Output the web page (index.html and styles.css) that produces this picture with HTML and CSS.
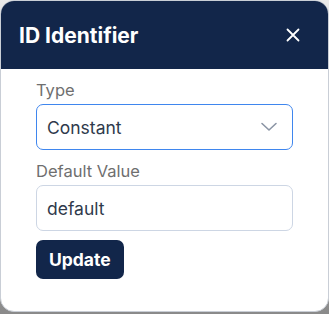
FILE: index.html
```html
<!DOCTYPE html>
<html lang="en">
<head>
    <meta charset="UTF-8">
    <meta name="viewport" content="width=device-width, initial-scale=1.0">
    <title>ID Identifier</title>
    <link rel="stylesheet" href="styles.css">
</head>
<body>
    <div class="dialog">
        <header class="dialog-header">
            <h1 class="dialog-title">ID Identifier</h1>
            <button class="close-btn" aria-label="Close">
                <svg width="14" height="14" viewBox="0 0 14 14">
                    <path d="M1.5 1.5 L12.5 12.5 M12.5 1.5 L1.5 12.5" stroke="#fff" stroke-width="1.8" stroke-linecap="round"/>
                </svg>
            </button>
        </header>
        <form class="dialog-body">
            <div class="field">
                <label for="type">Type</label>
                <div class="select-box" id="type">
                    <span>Constant</span>
                    <svg width="18" height="10" viewBox="0 0 18 10">
                        <path d="M2 1.5 L9 8 L16 1.5" fill="none" stroke="#8b95a5" stroke-width="1.6" stroke-linecap="round" stroke-linejoin="round"/>
                    </svg>
                </div>
            </div>
            <div class="field">
                <label for="default-value">Default Value</label>
                <input type="text" id="default-value" value="default">
            </div>
            <button type="button" class="update-btn">Update</button>
        </form>
    </div>
</body>
</html>
```

FILE: styles.css
```css
html, body {
    margin: 0;
    height: 100%;
}
body {
    background: linear-gradient(#e9e9e9, #8a8a8a);
    font-family: "Inter", "Liberation Sans", sans-serif;
}
.dialog {
    box-sizing: border-box;
    width: 329px;
    height: 312px;
    background: #fff;
    border: 1px solid #c9ced6;
    border-radius: 14px;
    overflow: hidden;
}
.dialog-header {
    display: flex;
    align-items: center;
    justify-content: space-between;
    height: 68px;
    padding: 0 28px 0 18px;
    background-color: #12264a;
    color: #fff;
}
.dialog-title {
    margin: 0;
    font-size: 21px;
    font-weight: 700;
}
.close-btn {
    display: flex;
    padding: 0;
    background: none;
    border: none;
    cursor: pointer;
}
.dialog-body {
    display: flex;
    flex-direction: column;
    padding: 11px 35px 0 35px;
}
.field {
    display: flex;
    flex-direction: column;
    margin-bottom: 11px;
}
.field > label {
    font-size: 16.5px;
    line-height: 20px;
    color: #6f6f6f;
    margin-bottom: 4px;
}
.select-box, .field > input {
    box-sizing: border-box;
    height: 46px;
    border-radius: 7px;
    padding: 0 10px;
    font-family: "Inter", "Liberation Sans", sans-serif;
    font-size: 17.5px;
    color: #2f3a4c;
    background: #fff;
}
.select-box {
    display: flex;
    align-items: center;
    justify-content: space-between;
    border: 1px solid #3f86ee;
}
.select-box svg {
    margin-right: 4px;
}
.field > input {
    border: 1px solid #cdd6e4;
    outline: none;
}
.update-btn {
    align-self: flex-start;
    margin-top: -2px;
    height: 39px;
    padding: 0 13px;
    border: none;
    border-radius: 7px;
    background-color: #12264a;
    color: #fff;
    font-family: "Inter", "Liberation Sans", sans-serif;
    font-size: 17.5px;
    font-weight: 700;
    cursor: pointer;
}
```
